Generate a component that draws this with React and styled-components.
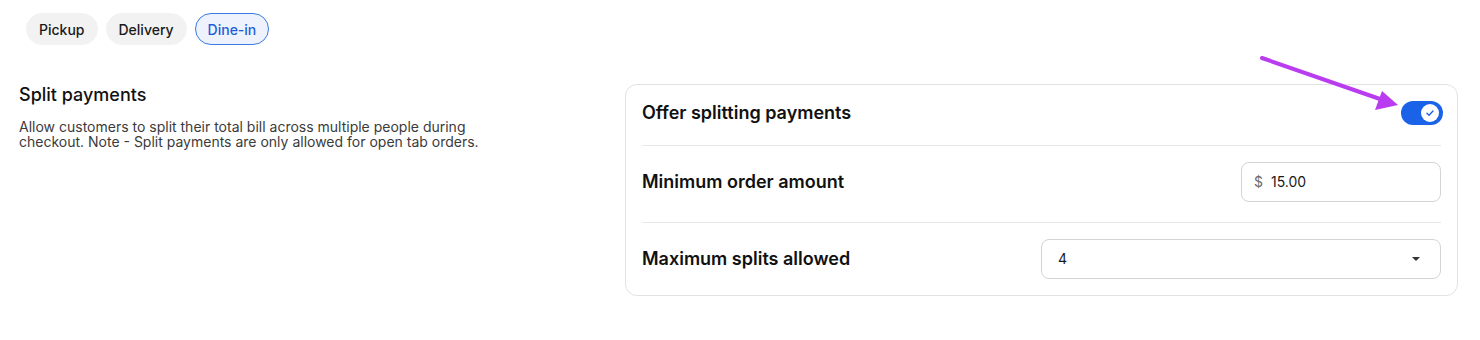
import React, { useState } from "react";
import styled, { createGlobalStyle } from "styled-components";

const GlobalStyle = createGlobalStyle`
  body {
    margin: 0;
    background: #ffffff;
    font-family: Inter, "Noto Sans", sans-serif;
    color: #111111;
  }
  * { box-sizing: border-box; }
`;

const Page = styled.div`
  position: relative;
  width: 1480px;
  height: 340px;
  padding: 13px 22px 0 19px;
`;

const Tabs = styled.div`
  display: flex;
  gap: 8px;
  padding-left: 7px;
`;

const Tab = styled.button`
  height: 32px;
  padding: 0 12px;
  border-radius: 16px;
  font-family: inherit;
  font-size: 14px;
  font-weight: 500;
  cursor: pointer;
  border: 1px solid ${p => (p.$active ? "#3a7ae6" : "#f2f2f2")};
  background: ${p => (p.$active ? "#edf2fd" : "#f2f2f2")};
  color: ${p => (p.$active ? "#1d5fd8" : "#1a1a1a")};
`;

const Section = styled.div`
  display: grid;
  grid-template-columns: 1fr 833px;
  margin-top: 39px;
`;

const Intro = styled.div`
  padding-top: 0;
`;

const Title = styled.h2`
  margin: 0;
  font-size: 18px;
  line-height: 22px;
  font-weight: 500;
  color: #111111;
`;

const Description = styled.p`
  margin: 13px 0 0;
  max-width: 470px;
  font-size: 14px;
  line-height: 15px;
  color: #3b3b3b;
`;

const Card = styled.div`
  border: 1px solid #e2e2e2;
  border-radius: 12px;
  padding: 0 16px;
`;

const Row = styled.div`
  display: flex;
  align-items: center;
  justify-content: space-between;
  padding: ${p => p.$pt || 16}px 0 ${p => p.$pb || 16}px;
  line-height: 28px;
  & + & {
    border-top: 1px solid #e8e8e8;
  }
`;

const Label = styled.span`
  font-size: 18px;
  font-weight: 600;
  color: #111111;
`;

const Switch = styled.button`
  position: relative;
  width: 42px;
  height: 24px;
  margin-right: -2px;
  border: none;
  border-radius: 12px;
  background: ${p => (p.$on ? "#1a63e8" : "#cfcfcf")};
  cursor: pointer;
  padding: 0;
`;

const Knob = styled.span`
  position: absolute;
  top: 3px;
  left: ${p => (p.$on ? "20px" : "3px")};
  width: 18px;
  height: 18px;
  border-radius: 50%;
  background: #ffffff;
  display: flex;
  align-items: center;
  justify-content: center;
`;

const InputBox = styled.div`
  display: flex;
  align-items: center;
  gap: 8px;
  width: ${p => p.$w}px;
  height: 40px;
  border: 1px solid #d4d4d4;
  border-radius: 8px;
  padding: 0 12px;
  font-size: 14px;
  color: #1a1a1a;
`;

const Prefix = styled.span`
  color: #6b6b6b;
`;

const SelectBox = styled(InputBox)`
  justify-content: space-between;
  padding: 0 20px 0 16px;
`;

const Caret = styled.span`
  width: 0;
  height: 0;
  border-left: 4px solid transparent;
  border-right: 4px solid transparent;
  border-top: 4px solid #333333;
`;

const Arrow = styled.svg`
  position: absolute;
  left: 1258px;
  top: 54px;
`;

export default function App() {
  const [tab, setTab] = useState("Dine-in");
  const [on, setOn] = useState(true);

  return (
    <>
      <GlobalStyle />
      <Page>
        <Tabs>
          {["Pickup", "Delivery", "Dine-in"].map(t => (
            <Tab key={t} $active={tab === t} onClick={() => setTab(t)}>
              {t}
            </Tab>
          ))}
        </Tabs>
        <Section>
          <Intro>
            <Title>Split payments</Title>
            <Description>
              Allow customers to split their total bill across multiple people during
              checkout. Note - Split payments are only allowed for open tab orders.
            </Description>
          </Intro>
          <Card>
            <Row $pt={14} $pb={18}>
              <Label>Offer splitting payments</Label>
              <Switch $on={on} onClick={() => setOn(!on)}>
                <Knob $on={on}>
                  <svg width="10" height="10" viewBox="0 0 10 10">
                    <path d="M2 5.2l2 2L8 3" fill="none" stroke="#1a63e8" strokeWidth="1.4" strokeLinecap="round" strokeLinejoin="round" />
                  </svg>
                </Knob>
              </Switch>
            </Row>
            <Row $pb={20}>
              <Label>Minimum order amount</Label>
              <InputBox $w={200}>
                <Prefix>$</Prefix>
                <span>15.00</span>
              </InputBox>
            </Row>
            <Row>
              <Label>Maximum splits allowed</Label>
              <SelectBox $w={400}>
                <span>4</span>
                <Caret />
              </SelectBox>
            </Row>
          </Card>
        </Section>
        <Arrow width="150" height="62" viewBox="0 0 150 62">
          <line x1="4" y1="4" x2="122" y2="45" stroke="#b93cf0" strokeWidth="4" strokeLinecap="round" />
          <polygon points="140,51 117,56 124,37" fill="#b93cf0" />
        </Arrow>
      </Page>
    </>
  );
}
